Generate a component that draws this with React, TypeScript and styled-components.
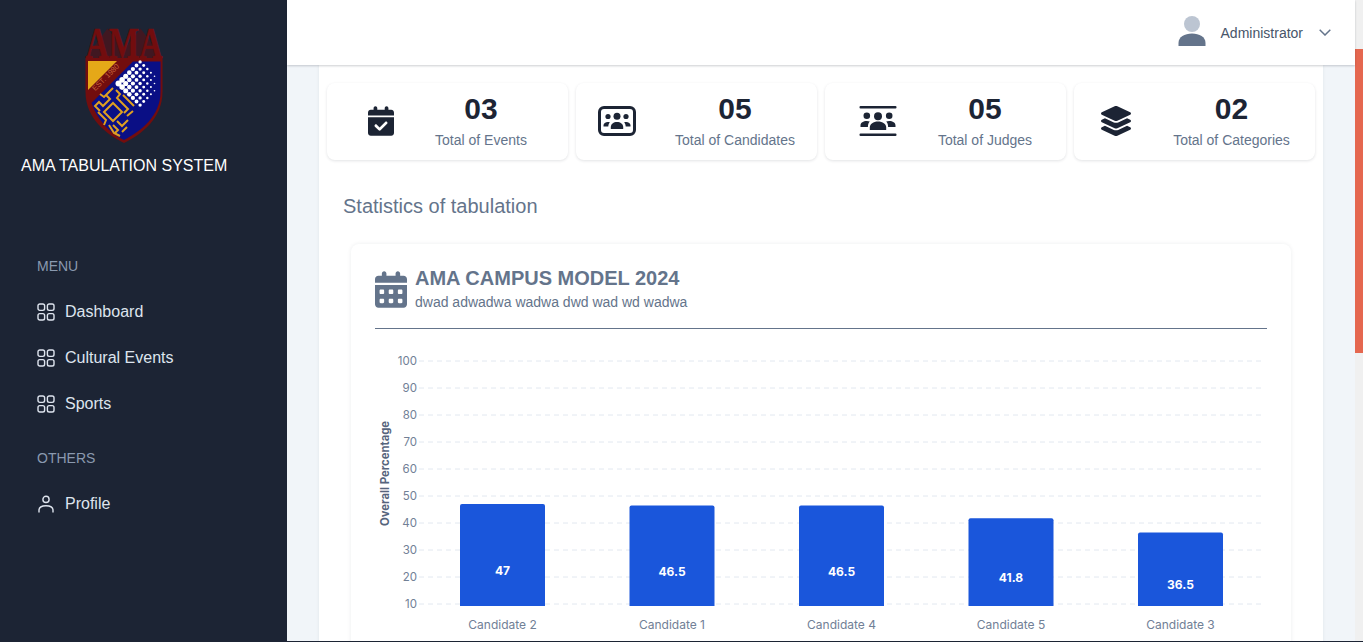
import React from 'react';
import styled, { createGlobalStyle } from 'styled-components';
import { FaCalendarCheck, FaCalendarDays, FaLayerGroup } from 'react-icons/fa6';

const Global = createGlobalStyle`
  html, body { margin: 0; padding: 0; height: 100%; overflow: hidden; }
  body { font-family: "Liberation Sans", Arial, sans-serif; background: #f1f5f9; }
  * { box-sizing: border-box; }
`;

const Page = styled.div`
  width: 1363px;
  height: 642px;
  display: flex;
  flex-direction: column;
  overflow: hidden;
`;
const Row = styled.div`
  flex: 1;
  min-height: 0;
  display: flex;
`;
const BottomEdge = styled.div`
  height: 1px;
  background: #1c2434;
`;
const Sidebar = styled.aside`
  width: 287px;
  flex: none;
  background: #1c2434;
  color: #fff;
  display: flex;
  flex-direction: column;
`;
const Brand = styled.div`
  display: flex;
  flex-direction: column;
  height: 256px;
  padding-top: 28px;
`;
const LogoWrap = styled.div`
  padding-left: 85px;
  height: 115px;
  svg { display: block; overflow: visible; }
`;
const BrandName = styled.div`
  margin: 14px 0 0 21px;
  font-size: 16px;
  line-height: 18px;
  color: #fff;
  white-space: nowrap;
`;
const Nav = styled.nav`
  padding-left: 37px;
  display: flex;
  flex-direction: column;
`;
const NavHeading = styled.div<{ $gap: number }>`
  font-size: 14px;
  line-height: 20px;
  color: #8a99af;
  margin-top: ${(p) => p.$gap}px;
`;
const NavList = styled.div`
  margin-top: 13px;
`;
const NavItem = styled.a`
  height: 46px;
  display: flex;
  align-items: center;
  gap: 10px;
  font-size: 16px;
  color: #dee4ee;
  svg { flex: none; }
`;
const Main = styled.div`
  flex: 1;
  min-width: 0;
  display: flex;
  flex-direction: column;
`;
const Header = styled.header`
  height: 65px;
  flex: none;
  background: #fff;
  box-shadow: 0 1px 2px rgba(28, 36, 52, 0.22);
  position: relative;
  z-index: 1;
  display: flex;
  align-items: center;
  justify-content: flex-end;
  padding-right: 24px;
  svg:first-child { margin-bottom: 3px; }
`;
const UserName = styled.span`
  font-size: 14px;
  color: #475569;
  margin: 0 16px 0 15px;
`;
const Content = styled.main`
  flex: 1;
  min-height: 0;
  overflow: hidden;
  padding: 0 32px;
`;
const Panel = styled.section`
  background: #fff;
  box-shadow: 0 0 3px rgba(28, 36, 52, 0.08);
  padding: 18px 8px 0;
  min-height: 100%;
`;
const Stats = styled.div`
  display: grid;
  grid-template-columns: repeat(4, 241px);
  gap: 8px;
`;
const StatCard = styled.div<{ $gap: number }>`
  height: 77px;
  background: #fff;
  border-radius: 8px;
  box-shadow: 0 1px 3px rgba(28, 36, 52, 0.13);
  display: flex;
  align-items: center;
  justify-content: center;
  gap: ${(p) => p.$gap}px;
  padding-bottom: 3px;
`;
const StatIcon = styled.div`
  color: #1c2434;
  display: flex;
  margin-top: 2px;
`;
const StatText = styled.div`
  text-align: center;
  white-space: nowrap;
`;
const StatValue = styled.div`
  font-size: 30px;
  line-height: 36px;
  font-weight: 700;
  color: #1c2434;
`;
const StatLabel = styled.div`
  font-size: 14px;
  line-height: 20px;
  color: #64748b;
  margin-top: 3px;
`;
const EventIcon = styled(FaCalendarCheck)`
  width: 26px;
  height: 30px;
`;
const LayersIcon = styled(FaLayerGroup)`
  width: 34px;
  height: 30px;
`;
const SectionTitle = styled.h2`
  margin: 34px 0 0 16px;
  font-size: 20px;
  line-height: 24px;
  font-weight: 400;
  color: #64748b;
`;
const ChartCard = styled.div`
  margin: 26px 24px 0;
  background: #fff;
  border-radius: 8px;
  box-shadow: 0 0 4px rgba(28, 36, 52, 0.08);
  padding: 24px 24px 0;
`;
const ChartHead = styled.div`
  display: flex;
  align-items: center;
  gap: 8px;
  height: 37px;
  margin-top: 3px;
  color: #64748b;
`;
const HeadIcon = styled(FaCalendarDays)`
  width: 32px;
  height: 37px;
  flex: none;
`;
const TitleBlock = styled.div`
  padding-bottom: 2px;
`;
const ChartTitle = styled.h3`
  margin: 0;
  font-size: 20px;
  line-height: 22px;
  font-weight: 700;
  color: #64748b;
`;
const ChartSub = styled.p`
  margin: 5px 0 0;
  font-size: 14px;
  line-height: 16px;
  color: #64748b;
`;
const Divider = styled.hr`
  margin: 20px 0 0;
  border: 0;
  height: 1px;
  background: #64748b;
`;
const ChartSvg = styled.svg`
  display: block;
  margin-top: 11px;
  width: 892px;
  height: 340px;
`;
const ScrollTrack = styled.div`
  width: 8px;
  flex: none;
  background: #f0f0f0;
  padding-top: 49px;
`;
const ScrollThumb = styled.div`
  height: 304px;
  background: #e5674f;
`;

const CandidatesIcon = () => (
  <svg width="38" height="30" viewBox="0 0 38 30" fill="none">
    <rect x="1.5" y="1.5" width="35" height="27" rx="4.5" stroke="currentColor" strokeWidth="3" />
    <g fill="currentColor">
      <circle cx="19" cy="10.2" r="3.5" />
      <circle cx="10" cy="10.5" r="2.6" />
      <circle cx="28" cy="10.500" r="2.6" />
      <path d="M12.800 23v-2c0-3 2.800-5 6.200-5s6.200 2 6.200 5v2z" />
      <path d="M5.500 20.500v-1.200c0-2 2-3.300 4.300-3.300.8 0 1.500.1 2.100.4-1.100 1-1.600 2.400-1.600 4.100z" />
      <path d="M32.500 20.500v-1.200c0-2-2-3.300-4.300-3.300-.8 0-1.500.1-2.100.4 1.100 1 1.600 2.400 1.600 4.100z" />
    </g>
  </svg>
);

const JudgesIcon = () => (
  <svg width="38" height="30" viewBox="0 0 38 30" fill="currentColor">
    <rect x="0.500" y="0" width="37" height="2.600" rx="1" />
    <rect x="0.500" y="27.400" width="37" height="2.600" rx="1" />
    <circle cx="19" cy="10.300" r="4" />
    <circle cx="7.800" cy="9.800" r="3.300" />
    <circle cx="30.200" cy="9.800" r="3.300" />
    <path d="M10.800 24v-2.500c0-3.500 3.600-6 8.200-6s8.200 2.500 8.200 6V24z" />
    <path d="M1.500 21v-1.600c0-2.700 2.800-4.400 6.300-4.400 1.100 0 2.100.2 3 .5-1.200 1.200-1.900 2.900-1.900 5.500z" />
    <path d="M36.500 21v-1.600c0-2.700-2.800-4.400-6.300-4.400-1.100 0-2.100.2-3 .5 1.200 1.200 1.900 2.900 1.900 5.500z" />
  </svg>
);

const GridIcon = () => (
  <svg width="18" height="18" viewBox="0 0 18 18" fill="none" stroke="#dee4ee" strokeWidth="1.4">
    <rect x="1" y="1" width="6.6" height="6.4" rx="1.8" />
    <rect x="10.4" y="1" width="6.6" height="6.4" rx="1.8" />
    <rect x="1" y="10.6" width="6.6" height="6.4" rx="1.8" />
    <rect x="10.4" y="10.6" width="6.6" height="6.4" rx="1.8" />
  </svg>
);

const PersonIcon = () => (
  <svg width="18" height="18" viewBox="0 0 18 18" fill="none" stroke="#dee4ee" strokeWidth="1.4">
    <circle cx="9" cy="4.4" r="3.1" />
    <path d="M2 17.500v-2.200c0-3 2.600-4.600 7-4.600s7 1.600 7 4.600v2.200" />
  </svg>
);

const Avatar = () => (
  <svg width="28" height="30" viewBox="0 0 28 30">
    <circle cx="14" cy="8" r="8" fill="#bcc5d2" />
    <path d="M0.500 30v-3C0.500 21 6.500 17.500 14 17.500S27.500 21 27.500 27v3z" fill="#64748b" />
  </svg>
);

const Chevron = () => (
  <svg width="12" height="7" viewBox="0 0 12 7" fill="none" stroke="#64748b" strokeWidth="1.500">
    <path d="M0.700 0.800L6 6l5.300-5.200" />
  </svg>
);

const dots: { x: number; y: number; r: number }[] = [];
for (let i = 0; i < 7; i++) {
  for (let j = 0; j < 7; j++) {
    if (i + j > 10) continue;
    const d = i + j;
    dots.push({
      x: 118.500 + d * 3.600,
      y: 83.500 + (j - i) * 3.600,
      r: Math.max(0.800, 3 - d * 0.220),
    });
  }
}

const Logo = () => (
  <svg width="78" height="115" viewBox="85 28 78 115">
    <path d="M85.500 58L107.500 28.500L124 50L140.500 28.500L162.500 58Z" fill="#5f0d12" opacity="0.55" />
    <text
      x="124"
      y="57.500"
      textAnchor="middle"
      textLength="77"
      lengthAdjust="spacingAndGlyphs"
      fontFamily="'Liberation Serif', serif"
      fontWeight="700"
      fontSize="44"
      fill="#720d0e"
      stroke="#720d0e"
      strokeWidth="0.600"
    >
      AMA
    </text>
    <path d="M85.500 58H162.500V92C162.500 118 142 134 124 143C106 134 85.500 118 85.500 92Z" fill="#720d0e" />
    <path d="M133 61.500H160.500V92C160.500 116 141 131 124 140C110 133 98 121 91.500 103Z" fill="#0a0f85" />
    <path d="M88 61H117L88 90Z" fill="#e5a818" />
    <text
      x="107.500"
      y="79"
      textAnchor="middle"
      fontFamily="'Liberation Sans', sans-serif"
      fontSize="7.500"
      fill="#c4623a"
      transform="rotate(-45 107.500 79)"
    >
      EST. 1980
    </text>
    {dots.map((d, i) => (
      <circle key={i} cx={d.x} cy={d.y} r={d.r} fill="#fff" />
    ))}
    <g fill="none" stroke="#e0a020" strokeWidth="2">
      <path d="M113 103L122 112L113 121L104 112Z" />
      <path d="M110 91L104 97L100 94M113 88L106 95L110 99L103 106L99 102L95 106L100 111" />
      <path d="M116 90L120 94L117 98L128 109L124 113M134 106L123 95" />
      <path d="M98 112L106 120L104 125" />
      <path d="M113 125L118 130L115 133M117 121L122 126L128 120M127 116L133 111M127 127L122 132" />
      <path d="M109 125L114 133L120 136" />
    </g>
  </svg>
);

const stats = [
  { icon: <EventIcon />, value: '03', label: 'Total of Events', gap: 41 },
  { icon: <CandidatesIcon />, value: '05', label: 'Total of Candidates', gap: 39 },
  { icon: <JudgesIcon />, value: '05', label: 'Total of Judges', gap: 41 },
  { icon: <LayersIcon />, value: '02', label: 'Total of Categories', gap: 40 },
];

const bars = [
  { name: 'Candidate 2', value: 47, x: 460 },
  { name: 'Candidate 1', value: 46.5, x: 629.500 },
  { name: 'Candidate 4', value: 46.5, x: 799 },
  { name: 'Candidate 5', value: 41.8, x: 968.500 },
  { name: 'Candidate 3', value: 36.5, x: 1138 },
];
const ticks = [100, 90, 80, 70, 60, 50, 40, 30, 20, 10];
const yOf = (v: number) => 361 + (100 - v) * 2.7;
const inter = "Inter, 'Liberation Sans', sans-serif";

const Chart = () => (
  <ChartSvg viewBox="375 340 892 340">
    {ticks.map((t) => (
      <g key={t}>
        <line x1="419" x2="1262" y1={yOf(t)} y2={yOf(t)} stroke="#e2e8f0" strokeDasharray="5 4" />
        <text x="417" y={yOf(t) + 4} textAnchor="end" fontFamily={inter} fontSize="11.500" fill="#718096">
          {t}
        </text>
      </g>
    ))}
    <text
      x="385.500"
      y="473.500"
      textAnchor="middle"
      fontFamily={inter}
      fontSize="11.300"
      fontWeight="700"
      fill="#56647c"
      transform="rotate(-90 385.500 473.500)"
      dominantBaseline="middle"
    >
      Overall Percentage
    </text>
    {bars.map((b) => {
      const top = yOf(b.value);
      return (
        <g key={b.name}>
          <path
            d={`M${b.x} 606V${top + 2}a2 2 0 0 1 2 -2H${b.x + 83}a2 2 0 0 1 2 2V606Z`}
            fill="#1a56db"
          />
          <text
            x={b.x + 42.500}
            y={(top + 637) / 2 + 4.500}
            textAnchor="middle"
            fontFamily={inter}
            fontSize="12"
            fontWeight="700"
            fill="#fff"
          >
            {b.value}
          </text>
          <text x={b.x + 42.500} y="629" textAnchor="middle" fontFamily={inter} fontSize="12" fill="#718096">
            {b.name}
          </text>
        </g>
      );
    })}
  </ChartSvg>
);

export default function App() {
  return (
    <Page>
      <Global />
      <Row>
        <Sidebar>
          <Brand>
            <LogoWrap>
              <Logo />
            </LogoWrap>
            <BrandName>AMA TABULATION SYSTEM</BrandName>
          </Brand>
          <Nav>
            <NavHeading $gap={0}>MENU</NavHeading>
            <NavList>
              <NavItem><GridIcon />Dashboard</NavItem>
              <NavItem><GridIcon />Cultural Events</NavItem>
              <NavItem><GridIcon />Sports</NavItem>
            </NavList>
            <NavHeading $gap={21}>OTHERS</NavHeading>
            <NavList>
              <NavItem><PersonIcon />Profile</NavItem>
            </NavList>
          </Nav>
        </Sidebar>
        <Main>
          <Header>
            <Avatar />
            <UserName>Administrator</UserName>
            <Chevron />
          </Header>
          <Content>
            <Panel>
              <Stats>
                {stats.map((s) => (
                  <StatCard key={s.label} $gap={s.gap}>
                    <StatIcon>{s.icon}</StatIcon>
                    <StatText>
                      <StatValue>{s.value}</StatValue>
                      <StatLabel>{s.label}</StatLabel>
                    </StatText>
                  </StatCard>
                ))}
              </Stats>
              <SectionTitle>Statistics of tabulation</SectionTitle>
              <ChartCard>
                <ChartHead>
                  <HeadIcon />
                  <TitleBlock>
                    <ChartTitle>AMA CAMPUS MODEL 2024</ChartTitle>
                    <ChartSub>dwad adwadwa wadwa dwd wad wd wadwa</ChartSub>
                  </TitleBlock>
                </ChartHead>
                <Divider />
                <Chart />
              </ChartCard>
            </Panel>
          </Content>
        </Main>
        <ScrollTrack>
          <ScrollThumb />
        </ScrollTrack>
      </Row>
      <BottomEdge />
    </Page>
  );
}
